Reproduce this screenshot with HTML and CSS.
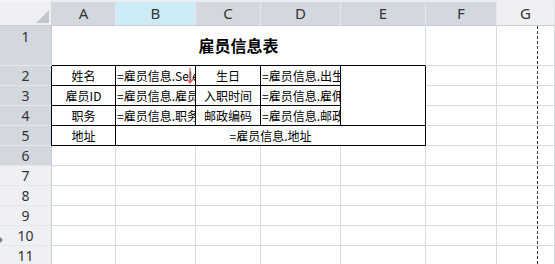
FILE: index.html
```html
<!DOCTYPE html>
<html lang="zh-CN">
<head>
<meta charset="utf-8">
<title>雇员信息表</title>
<link rel="stylesheet" href="styles.css">
</head>
<body>
<div class="sheet">
  <div class="corner"><span class="tri"></span></div>
  <div class="ch">A</div>
  <div class="ch active">B</div>
  <div class="ch">C</div>
  <div class="ch">D</div>
  <div class="ch">E</div>
  <div class="ch">F</div>
  <div class="ch light">G</div>

  <div class="rh top">1</div>
  <div class="c title">雇员信息表</div>
  <div class="c"></div>
  <div class="c"></div>

  <div class="rh">2</div>
  <div class="c t first ctr">姓名</div>
  <div class="c t fx sel">=雇员信息.Select<svg class="arrow" width="8" height="16" viewBox="0 0 8 16"><path d="M4 0V14.5M0.8 11L4 15L7.2 11" fill="none" stroke="#e8615c" stroke-width="1.3"/></svg></div>
  <div class="c t ctr">生日</div>
  <div class="c t fx">=雇员信息.出生日期</div>
  <div class="c t tall"></div>
  <div class="c"></div>
  <div class="c"></div>

  <div class="rh">3</div>
  <div class="c t first ctr">雇员ID</div>
  <div class="c t fx">=雇员信息.雇员ID</div>
  <div class="c t ctr">入职时间</div>
  <div class="c t fx">=雇员信息.雇佣日期</div>
  <div class="c"></div>
  <div class="c"></div>

  <div class="rh">4</div>
  <div class="c t first ctr">职务</div>
  <div class="c t fx">=雇员信息.职务</div>
  <div class="c t ctr">邮政编码</div>
  <div class="c t fx">=雇员信息.邮政编码</div>
  <div class="c"></div>
  <div class="c"></div>

  <div class="rh">5</div>
  <div class="c t first ctr">地址</div>
  <div class="c t wide ctr">=雇员信息.地址</div>
  <div class="c"></div>
  <div class="c"></div>

  <div class="rh">6</div>
  <div class="c"></div><div class="c"></div><div class="c"></div><div class="c"></div><div class="c"></div><div class="c"></div><div class="c"></div>

  <div class="rh light">7</div>
  <div class="c"></div><div class="c"></div><div class="c"></div><div class="c"></div><div class="c"></div><div class="c"></div><div class="c"></div>

  <div class="rh light">8</div>
  <div class="c"></div><div class="c"></div><div class="c"></div><div class="c"></div><div class="c"></div><div class="c"></div><div class="c"></div>

  <div class="rh light">9</div>
  <div class="c"></div><div class="c"></div><div class="c"></div><div class="c"></div><div class="c"></div><div class="c"></div><div class="c"></div>

  <div class="rh light">10</div>
  <div class="c"></div><div class="c"></div><div class="c"></div><div class="c"></div><div class="c"></div><div class="c"></div><div class="c"></div>

  <div class="rh light">11</div>
  <div class="c"></div><div class="c"></div><div class="c"></div><div class="c"></div><div class="c"></div><div class="c"></div><div class="c"></div>

  <div class="pagebreak"></div>
  <div class="marker"></div>
</div>
</body>
</html>
```
FILE: styles.css
```css
html, body {
  margin: 0;
  padding: 0;
  background: #ffffff;
  overflow: hidden;
}
body {
  width: 555px;
  height: 264px;
  font-family: "Noto Sans", "Noto Sans CJK SC", sans-serif;
  color: #111;
}
.sheet {
  position: relative;
  display: grid;
  grid-template-columns: 52px 64px 80px 65px 80px 85px 71px 58px;
  grid-template-rows: 26px 40px;
  grid-auto-rows: 20px;
  width: 555px;
}
.sheet > div {
  box-sizing: border-box;
}
.corner {
  position: relative;
  background: #eef0f3;
  border-top: 2px solid #f4f5f7;
  border-right: 1px solid #d0d4da;
  border-bottom: 1px solid #c9ced6;
}
.tri {
  position: absolute;
  right: 2px;
  bottom: 2px;
  width: 0;
  height: 0;
  border-left: 13px solid transparent;
  border-bottom: 13px solid #c3c7cd;
}
.ch {
  background: #d3d8df;
  border-top: 2px solid #eceef1;
  border-right: 1px solid #e4e7eb;
  border-bottom: 1px solid #c9ced6;
  font-size: 15px;
  line-height: 22px;
  text-align: center;
  color: #333;
}
.ch.active { background: #cdebf7; }
.ch.light { background: #eef0f3; }
.rh {
  background: #d3d8df;
  border-right: 1px solid #c9ced6;
  border-bottom: 1px solid #e4e7eb;
  font-size: 14px;
  line-height: 19px;
  text-align: center;
  color: #333;
}
.rh.top { line-height: 22px; }
.rh.light { background: #eef0f3; }
.c {
  border-right: 1px solid #d6dbe2;
  border-bottom: 1px solid #d6dbe2;
  font-family: "Noto Sans CJK SC", sans-serif;
  font-size: 12px;
  line-height: 19px;
  white-space: nowrap;
  overflow: hidden;
}
.title {
  grid-column: span 5;
  border-right-color: #d6dbe2;
  border-bottom-color: #000;
  font-size: 16px;
  font-weight: bold;
  line-height: 39px;
  text-align: center;
  color: #000;
}
.t {
  border-right-color: #000;
  border-bottom-color: #000;
  color: #000;
}
.first { box-shadow: -1px 0 0 #000; }
.ctr { text-align: center; }
.fx { padding-left: 1px; }
.sel { position: relative; }
.arrow {
  position: absolute;
  right: 1px;
  top: 2px;
}
.tall { grid-row: span 3; }
.wide { grid-column: span 4; }
.pagebreak {
  position: absolute;
  left: 537px;
  top: 26px;
  width: 1px;
  height: 240px;
  background: repeating-linear-gradient(to bottom, #3a3a3a 0 3px, transparent 3px 5px);
}
.marker {
  position: absolute;
  left: 0;
  top: 237px;
  width: 0;
  height: 0;
  border-top: 3px solid transparent;
  border-bottom: 3px solid transparent;
  border-left: 3px solid #7a8290;
}
```
